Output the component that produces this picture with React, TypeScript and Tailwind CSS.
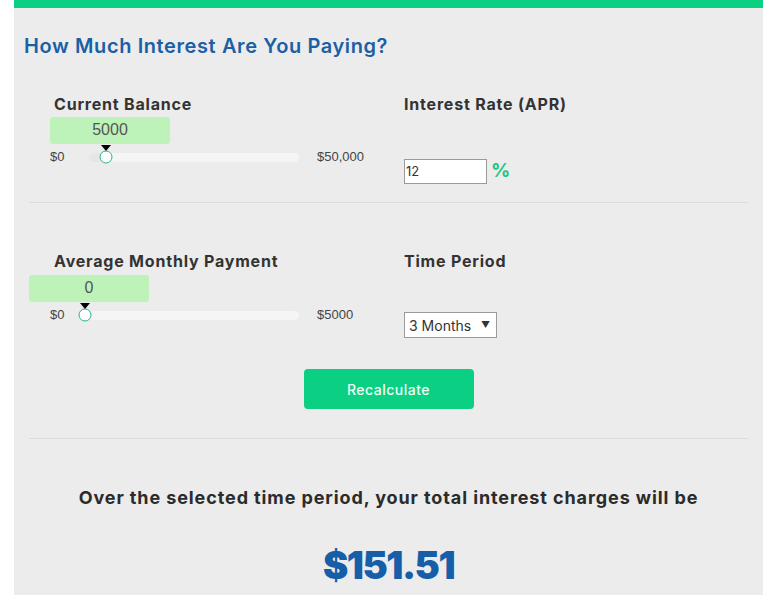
import React from "react";

type SliderProps = {
  value: number;
  max: number;
  maxLabel: string;
};

// track is 210px wide, thumb sits 4px left of the track start at zero
function ValueSlider({ value, max, maxLabel }: SliderProps) {
  const thumb = -4 + (value / max) * 210;
  return (
    <div className="relative pt-[37px]">
      <div className="flex items-center h-[12px]">
        <span className="w-[39px] text-[13px] text-[#444] font-['Liberation_Sans',Arial,sans-serif]">$0</span>
        <div className="relative w-[210px] h-[9px] rounded-full bg-[#f5f5f5]">
          <div
            className="absolute left-0 top-0 h-[9px] rounded-l-full bg-[#e6e6e6]"
            style={{ width: Math.max(thumb, 0) }}
          />
          <div
            className="absolute top-1/2 -translate-y-1/2 -translate-x-1/2 w-[13px] h-[13px] rounded-full bg-white border-[1.5px] border-[#26b495]"
            style={{ left: thumb }}
          />
          {/* value bubble over the thumb */}
          <div
            className="absolute top-[-36px] w-[120px] h-[27px] rounded-[3px] bg-[#bdf3b8] flex items-center justify-center text-[16px] text-[#555] font-['Liberation_Sans',Arial,sans-serif]"
            style={{ left: thumb - 56 }}
          >
            {value}
          </div>
          <div
            className="absolute top-[-8px] -translate-x-1/2 w-0 h-0 border-l-[5px] border-r-[5px] border-t-[6px] border-l-transparent border-r-transparent border-t-black"
            style={{ left: thumb }}
          />
        </div>
        <span className="ml-[18px] text-[13px] text-[#444] font-['Liberation_Sans',Arial,sans-serif]">{maxLabel}</span>
      </div>
    </div>
  );
}

export default function App() {
  return (
    <div className="min-h-screen bg-white px-[14px] font-['Inter',sans-serif]">
      <div className="bg-[#ececec] min-h-[595px]">
        <div className="h-[8px] bg-[#0bcf83]" />
        <h2 className="pt-[26px] pl-[10px] text-[20px] leading-[24px] font-semibold tracking-[0.6px] text-[#1b5fa5]">
          How Much Interest Are You Paying?
        </h2>

        <div className="mx-[15px]">
          {/* balance + rate */}
          <div className="grid grid-cols-[375px_1fr] h-[145px] pt-[36px] border-b border-[#dcdcdc]">
            <div className="pl-[21px]">
              <div className="pl-[4px] text-[16px] leading-[20px] font-bold tracking-[0.8px] text-[#333]">Current Balance</div>
              <ValueSlider value={5000} max={50000} maxLabel="$50,000" />
            </div>
            <div>
              <div className="text-[16px] leading-[20px] font-bold tracking-[0.8px] text-[#333]">Interest Rate (APR)</div>
              <div className="mt-[43px] flex items-center">
                <input
                  defaultValue="12"
                  className="w-[83px] h-[25px] bg-white border border-[#9a9a9a] px-[1px] text-[13px] text-[#333] outline-none font-['Inter',sans-serif]"
                />
                <span className="ml-[4px] text-[19px] font-bold text-[#1cc67f]">%</span>
              </div>
            </div>
          </div>

          {/* payment + period */}
          <div className="h-[236px] pt-[48px] border-b border-[#dcdcdc]">
            <div className="grid grid-cols-[375px_1fr]">
              <div className="pl-[21px]">
                <div className="pl-[4px] text-[16px] leading-[20px] font-bold tracking-[0.8px] text-[#333]">Average Monthly Payment</div>
                <div className="mt-[1px]">
                  <ValueSlider value={0} max={5000} maxLabel="$5000" />
                </div>
              </div>
              <div>
                <div className="text-[16px] leading-[20px] font-bold tracking-[0.8px] text-[#333]">Time Period</div>
                <div className="mt-[41px] w-[93px] h-[26px] bg-white border border-[#9a9a9a] flex items-center justify-between pl-[4px] pr-[6px] text-[14px] text-[#333]">
                  <span>3 Months</span>
                  <span className="text-[9px]">▼</span>
                </div>
              </div>
            </div>
            <div className="flex justify-center mt-[31px]">
              <button className="w-[170px] h-[40px] rounded-[4px] bg-[#0bcf83] text-[14px] font-medium tracking-[0.5px] text-[#effff6]">
                Recalculate
              </button>
            </div>
          </div>

          <div className="pt-[47px] text-center">
            <div className="text-[18px] leading-[24px] font-bold text-[#2b2b2b] tracking-[0.9px]">
              Over the selected time period, your total interest charges will be
            </div>
            <div className="mt-[31px] text-[38px] leading-[48px] font-black text-[#175ea8] tracking-[-1.5px]">
              $151.51
            </div>
          </div>
        </div>
      </div>
    </div>
  );
}
